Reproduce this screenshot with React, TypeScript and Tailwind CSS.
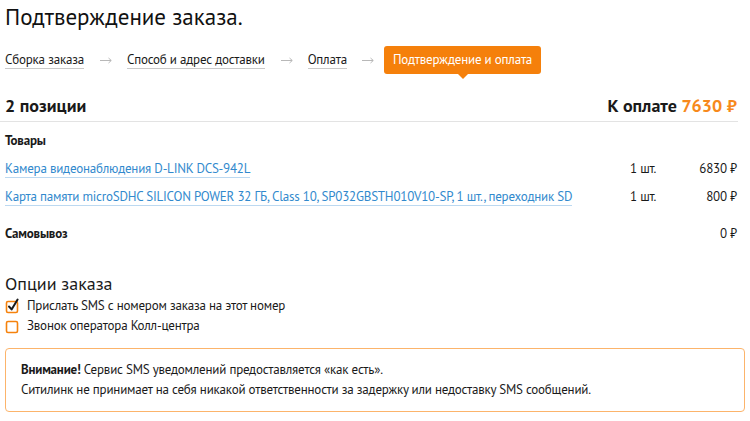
function Arrow({ last }: { last?: boolean }) {
  return (
    <svg width="12" height="7" viewBox="0 0 12 7" className={last ? 'ml-[15px] mr-[10px] shrink-0' : 'ml-[16px] mr-[15px] shrink-0'} aria-hidden>
      <path d="M0 3.5H11M8.5 1L11.3 3.5L8.5 6" fill="none" stroke="#b8b8b8" strokeWidth="1" />
    </svg>
  );
}

function CheckBox({ checked }: { checked?: boolean }) {
  return (
    <svg width="16" height="16" viewBox="0 0 16 16" className="shrink-0" aria-hidden>
      <rect x="1.5" y="3.5" width="11" height="11" rx="1.5" fill="none" stroke="#f5820d" strokeWidth="1.6" />
      {checked && <path d="M4 8.5L6.6 11.4L12.6 1.6" fill="none" stroke="#1a1a1a" strokeWidth="2" strokeLinecap="round" strokeLinejoin="round" />}
    </svg>
  );
}

export default function App() {
  const font = { fontFamily: '"PT Sans", Lato, "Noto Sans", sans-serif' };
  return (
    <div className="w-[750px] h-[421px] bg-white text-[#1a1a1a] overflow-hidden" style={font}>
      <h1 className="pl-[5px] pt-[2px] text-[23px] leading-[30px] font-normal text-[#111]">Подтверждение заказа.</h1>

      <div className="mt-[14px] flex items-center h-[28px] pl-[5px] text-[13px] tracking-[-0.2px]">
        <span className="border-b border-[#c9c9c9] leading-[16px]">Сборка заказа</span>
        <Arrow />
        <span className="border-b border-[#c9c9c9] leading-[16px]">Способ и адрес доставки</span>
        <Arrow />
        <span className="border-b border-[#c9c9c9] leading-[16px]">Оплата</span>
        <Arrow last />
        <span className="relative h-[28px] flex items-center px-[9px] bg-[#f5800b] text-white rounded-[3px]">
          Подтверждение и оплата
          <span className="absolute left-1/2 -translate-x-1/2 top-full w-0 h-0 border-l-[5px] border-r-[5px] border-t-[5px] border-l-transparent border-r-transparent border-t-[#f5800b]" />
        </span>
      </div>

      <div className="w-[738px]">
        <div className="mt-[21px] flex items-end justify-between pl-[5px] pr-[1px] pb-[4px] border-b border-[#e3e3e3]">
          <span className="text-[18px] leading-[22px] font-bold">2 позиции</span>
          <span className="text-[18px] leading-[22px] font-bold">
            К оплате <span className="text-[#f7891c]">7630 ₽</span>
          </span>
        </div>

        <div className="pl-[5px] pr-[1px] text-[13px] tracking-[-0.2px]">
          <div className="mt-[11px] font-bold leading-[16px]">Товары</div>
          <div className="mt-[11px] flex items-center h-[18px]">
            <span className="flex-1 whitespace-nowrap">
              <span className="text-[#3189cd] border-b border-[#bcd9f1] leading-[16px]">Камера видеонаблюдения D-LINK DCS-942L</span>
            </span>
            <span className="w-[30px] whitespace-nowrap">1 шт.</span>
            <span className="w-[77px] text-right whitespace-nowrap">6830 ₽</span>
          </div>
          <div className="mt-[10px] flex items-center h-[18px]">
            <span className="flex-1 whitespace-nowrap">
              <span className="text-[#3189cd] border-b border-[#bcd9f1] leading-[16px]">Карта памяти microSDHC SILICON POWER 32 ГБ, Class 10, SP032GBSTH010V10-SP, 1 шт., переходник SD</span>
            </span>
            <span className="w-[30px] whitespace-nowrap">1 шт.</span>
            <span className="w-[77px] text-right whitespace-nowrap">800 ₽</span>
          </div>
          <div className="mt-[19px] flex items-center h-[18px]">
            <span className="flex-1 font-bold">Самовывоз</span>
            <span className="w-[77px] text-right whitespace-nowrap">0 ₽</span>
          </div>
        </div>
      </div>

      <div className="pl-[5px] mt-[29px]">
        <div className="text-[18px] leading-[24px]">Опции заказа</div>
        <div className="flex items-center gap-[6px] h-[20px] text-[13px] tracking-[-0.2px]">
          <CheckBox checked />
          <span>Прислать SMS с номером заказа на этот номер</span>
        </div>
        <div className="flex items-center gap-[6px] h-[20px] text-[13px] tracking-[-0.2px]">
          <CheckBox />
          <span>Звонок оператора Колл-центра</span>
        </div>
      </div>

      <div className="px-[5px] mt-[12px]">
        <div className="border border-[#fcb46b] rounded-[4px] pl-[15px] py-[11px] text-[13px] leading-[20px] tracking-[-0.2px]">
          <div>
            <span className="font-bold">Внимание!</span> Сервис SMS уведомлений предоставляется «как есть».
          </div>
          <div>Ситилинк не принимает на себя никакой ответственности за задержку или недоставку SMS сообщений.</div>
        </div>
      </div>
    </div>
  );
}
